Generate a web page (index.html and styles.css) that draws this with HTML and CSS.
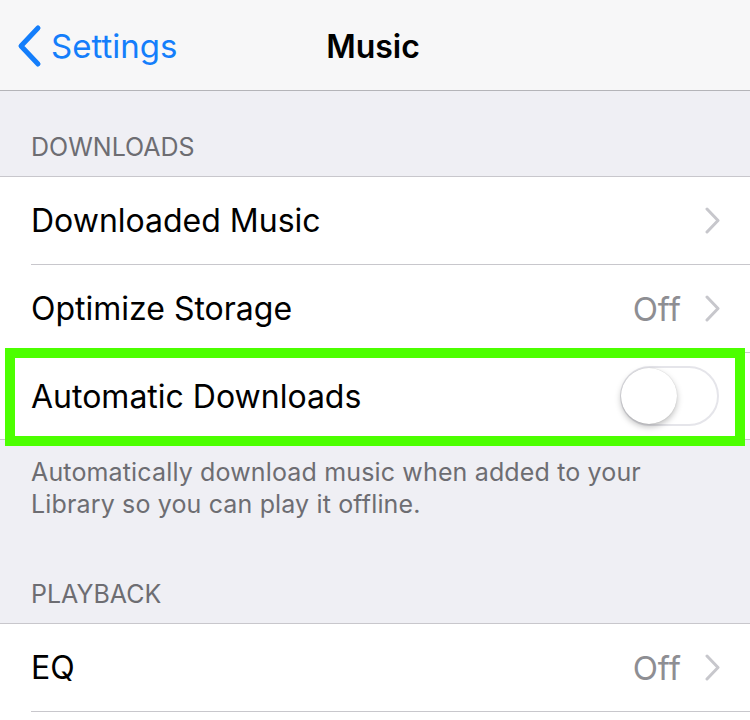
FILE: index.html
```
<html>
<head>
<title>Music</title>
<link rel="stylesheet" href="styles.css">
</head>
<body>
<div class="navbar">
	<a class="back">
		<svg class="back-chevron" width="26" height="44" viewBox="0 0 26 44"><polyline points="22,4 5,22 22,40" /></svg>
		<span>Settings</span>
	</a>
	<div class="title">Music</div>
	<div></div>
</div>

<div class="section-header">DOWNLOADS</div>
<ul class="group">
	<li class="cell">
		<div class="cell-inner">
			<span class="label">Downloaded Music</span>
			<span class="accessory">
				<svg class="chevron" width="16" height="27" viewBox="0 0 16 27"><polyline points="2,2 13,13.5 2,25" /></svg>
			</span>
		</div>
	</li>
	<li class="cell">
		<div class="cell-inner">
			<span class="label">Optimize Storage</span>
			<span class="accessory">
				<span class="detail">Off</span>
				<svg class="chevron" width="16" height="27" viewBox="0 0 16 27"><polyline points="2,2 13,13.5 2,25" /></svg>
			</span>
		</div>
	</li>
	<li class="cell highlight">
		<div class="cell-inner">
			<span class="label">Automatic Downloads</span>
			<span class="accessory">
				<span class="switch"><span class="knob"></span></span>
			</span>
		</div>
	</li>
</ul>
<p class="section-footer">Automatically download music when added to your Library so you can play it offline.</p>

<div class="section-header playback">PLAYBACK</div>
<ul class="group">
	<li class="cell">
		<div class="cell-inner">
			<span class="label">EQ</span>
			<span class="accessory">
				<span class="detail">Off</span>
				<svg class="chevron" width="16" height="27" viewBox="0 0 16 27"><polyline points="2,2 13,13.5 2,25" /></svg>
			</span>
		</div>
	</li>
	<li class="cell">
		<div class="cell-inner"></div>
	</li>
</ul>
</body>
</html>
```

FILE: styles.css
```
body {
	margin:0;
	background-color:#efeff4;
	font-family:Inter,'Liberation Sans',sans-serif;
	color:#000;
}
.navbar {
	height:90px;
	background-color:#f7f7f8;
	border-bottom:1px solid #b4b4b8;
	display:grid;
	grid-template-columns:1fr auto 1fr;
	align-items:center;
}
.back {
	display:flex;
	align-items:center;
	gap:9px;
	padding-left:16px;
	padding-top:2px;
	color:#147efb;
	font-size:33px;
}
.back-chevron {
	fill:none;
	stroke:#147efb;
	stroke-width:5;
	stroke-linecap:round;
	stroke-linejoin:round;
}
.title {
	font-size:32px;
	font-weight:600;
	padding-top:2px;
	margin-left:-4px;
}
.section-header {
	height:85px;
	box-sizing:border-box;
	display:flex;
	align-items:flex-end;
	padding:0 31px 14px;
	font-size:25px;
	line-height:30px;
	color:#6d6d72;
}
.playback {
	height:86px;
}
.group {
	list-style:none;
	margin:0;
	padding:0;
	background-color:#fff;
	border-top:1px solid #c8c7cc;
	border-bottom:1px solid #c8c7cc;
}
.cell {
	padding-left:31px;
	position:relative;
}
.cell-inner {
	height:87px;
	display:flex;
	align-items:center;
	justify-content:space-between;
	padding-right:31px;
	border-bottom:1px solid #c8c7cc;
}
.cell:last-child .cell-inner {
	height:86px;
}
.group .cell.highlight .cell-inner {
	border-bottom:none;
}
.label {
	font-size:32px;
}
.accessory {
	display:flex;
	align-items:center;
	gap:24px;
}
.detail {
	font-size:33px;
	color:#8e8e93;
}
.chevron {
	fill:none;
	stroke:#c7c7cc;
	stroke-width:3;
	stroke-linecap:round;
	stroke-linejoin:round;
	margin-right:-2px;
}
.switch {
	width:99px;
	height:60px;
	box-sizing:border-box;
	border:2px solid #e5e5ea;
	border-radius:30px;
	background-color:#fff;
	display:block;
	position:relative;
}
.knob {
	position:absolute;
	left:-1px;
	top:0px;
	width:56px;
	height:56px;
	border-radius:50%;
	background-color:#fff;
	box-shadow:0 3px 6px rgba(0,0,0,.25), 0 0 1px rgba(0,0,0,.2);
}
/* green outline drawn over the row */
.highlight::after {
	content:"";
	position:absolute;
	left:5px;
	right:5px;
	top:-5px;
	bottom:-7px;
	border:10px solid #4cff00;
	pointer-events:none;
}
.section-footer {
	margin:0;
	padding:16px 31px 17px;
	font-size:25px;
	line-height:32px;
	color:#6d6d72;
	letter-spacing:0.15px;
}
```
